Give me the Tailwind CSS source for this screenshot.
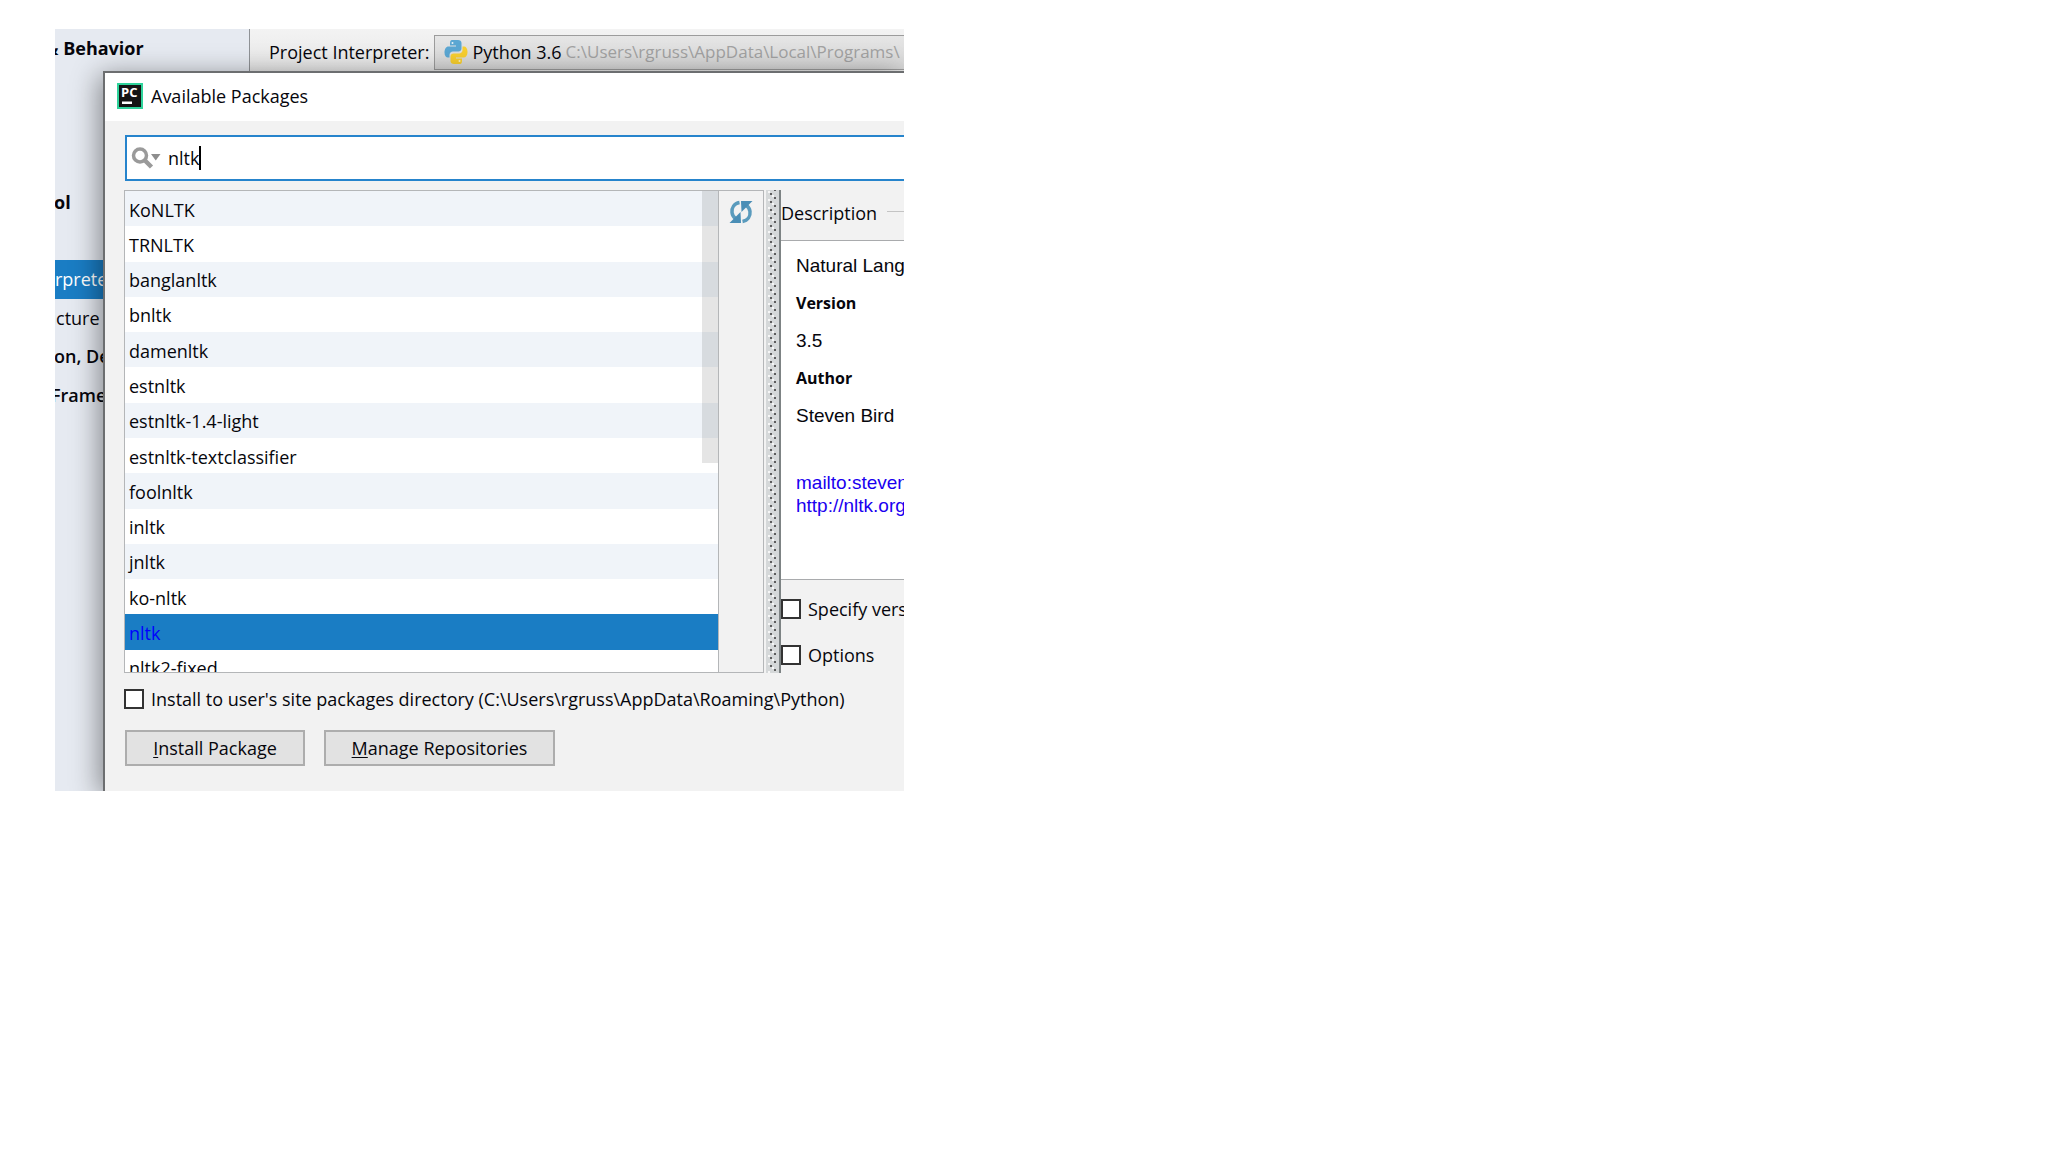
<!DOCTYPE html>
<html lang="en">
<head>
<meta charset="utf-8">
<title>Available Packages</title>
<script src="https://cdn.jsdelivr.net/npm/@tailwindcss/browser@4"></script>
</head>
<body class="bg-white font-['Open_Sans','Noto_Sans',sans-serif] text-[18px] leading-6 text-[#06060c]">
<main class="pt-[29px] pl-[55px]">
  <div class="grid w-full max-w-[849px] overflow-hidden bg-[#f2f2f2]">

    <!-- Settings window behind the dialog -->
    <div class="col-start-1 row-start-1 flex min-w-0">
      <nav class="w-[195px] shrink-0 border-r border-[#8f9296] bg-[#e6eaf1]">
        <ul class="grid h-[385px] grid-rows-10 items-stretch whitespace-nowrap">
          <li class="row-start-1 -ml-[10px] flex items-center font-bold">&amp; Behavior</li>
          <li class="row-start-5 -ml-px flex items-center font-bold">ol</li>
          <li class="row-start-7 flex items-center bg-[#1a7dc4] text-white">rprete</li>
          <li class="row-start-8 -ml-[10px] flex items-center">ucture</li>
          <li class="row-start-9 -ml-px flex items-center font-semibold">on, De</li>
          <li class="row-start-10 -ml-1 flex items-center font-semibold">Frame</li>
        </ul>
      </nav>
      <div class="flex h-[46px] min-w-0 flex-1 items-center gap-[5px] bg-linear-to-b from-[#f3f3f3] to-[#e6e6e6] pl-[19px] whitespace-nowrap">
        <label for="interp" class="shrink-0">Project Interpreter:</label>
        <div class="flex h-[35px] flex-1 items-center overflow-hidden border border-r-0 border-[#9c9c9c] bg-linear-to-b from-[#e6e6e6] to-[#d6d6d6] pl-[9px]">
          <svg class="mr-1 size-6 shrink-0" viewBox="0 0 24 24">
            <path fill="#5ba7d3" d="M8 0h6c2 0 3.500 1.200 3.500 3v5.500c0 2-1.500 3-3 3H9c-2 0-3.500 1.500-3.500 3.500V17.500H4c-2 0-3.500-1.600-3.500-5S2 6.500 4.500 6.500H12V5.500H6V3.500C6 1.500 6.500 0 8 0z"/>
            <path fill="#f8cf2f" d="M16 24h-6c-2 0-3.500-1.200-3.500-3v-4.500c0-2 1.500-3 3-3H15c2 0 3.500-1.500 3.500-3.500V6.500H20c2 0 3.500 2 3.500 5.500s-1.500 5.500-4 5.500H12v1h6v2c0 2-.500 3.500-2 3.500z"/>
            <circle cx="8.500" cy="3" r="1" fill="#e8f2f8"/><circle cx="15.500" cy="21" r="1" fill="#fdf3c4"/>
          </svg>
          <select id="interp" class="field-sizing-content shrink-0 appearance-none bg-transparent"><option>Python 3.6</option></select>
          <span class="ml-1 text-[17px] text-[#a2a2a2]">C:\Users\rgruss\AppData\Local\Programs\</span>
        </div>
      </div>
    </div>

    <!-- Available Packages dialog -->
    <section role="dialog" aria-labelledby="dlg" class="col-start-1 row-start-1 mt-[42px] ml-12 min-w-0 border-t-2 border-l-2 border-[#6c6e70] bg-[#f2f2f2] shadow-[-4px_4px_26px_rgba(0,0,0,0.42)]">
      <header class="flex h-12 items-center gap-2 bg-white pb-0.5 pl-3">
        <svg class="size-[26px]" viewBox="0 0 26 26">
          <rect width="26" height="26" fill="#2fd39b"/><rect x="2" y="2" width="22" height="22" fill="#151515"/>
          <text x="4" y="14" font-family="Open Sans, sans-serif" font-weight="700" font-size="13" fill="#fff">PC</text>
          <rect x="5" y="18.500" width="10" height="2.500" fill="#fff"/>
        </svg>
        <h1 id="dlg">Available Packages</h1>
      </header>

      <div class="pt-[14px] pb-[25px] pl-[19px]">
        <div class="ml-px flex h-[46px] items-center border-2 border-r-0 border-[#2684cc] bg-white pl-1">
          <svg class="w-[30px] shrink-0" viewBox="0 0 30 22" fill="none">
            <circle cx="9" cy="8.500" r="6.500" stroke="#9a9a9a" stroke-width="3.500"/>
            <path d="M13.500 13l7 7" stroke="#9a9a9a" stroke-width="4.500"/>
            <path d="M20 7h9.500l-4.750 6.500z" fill="#8e8e8e"/>
          </svg>
          <input aria-label="Search packages" value="nltk" class="ml-[7px] field-sizing-content outline-none">
          <span class="h-6 w-0.5 bg-black"></span>
        </div>

        <div class="mt-[9px] flex h-[483px]">
          <div class="flex w-[640px] shrink-0 border border-[#b4b6b8]">
            <div class="relative flex-1 overflow-hidden bg-white">
              <ul class="grid h-[494px] grid-rows-14 *:flex *:items-center *:pt-0.5 *:pl-1 *:odd:bg-[#f0f4f9]">
                <li>KoNLTK</li>
                <li>TRNLTK</li>
                <li>banglanltk</li>
                <li>bnltk</li>
                <li>damenltk</li>
                <li>estnltk</li>
                <li>estnltk-1.4-light</li>
                <li>estnltk-textclassifier</li>
                <li>foolnltk</li>
                <li>inltk</li>
                <li>jnltk</li>
                <li>ko-nltk</li>
                <li class="bg-[#1a7dc4]! text-[#0000ff]">nltk</li>
                <li>nltk2-fixed</li>
              </ul>
              <div class="absolute top-0 right-0 h-[272px] w-4 bg-black/10"></div>
            </div>
            <div class="flex w-[45px] justify-center border-l border-[#b4b6b8] pt-[9px] pr-px">
              <button aria-label="Reload list of packages" class="size-6 self-start">
                <svg viewBox="0 0 24 24" fill="none">
                  <path d="M10.500 2.500C5 3.500 2.500 8 3 12.500c.300 2.500 1.500 4.500 3.500 6" stroke="#5a9bbd" stroke-width="3.500"/>
                  <path d="M13.500 21.500c5.500-1 8-5.500 7.500-10-.300-2.500-1.500-4.500-3.500-6" stroke="#5a9bbd" stroke-width="3.500"/>
                  <path d="M12 1h11.500L12.500 12z" fill="#4a8eb6"/>
                  <path d="M12 23H.500l11-11z" fill="#4a8eb6"/>
                </svg>
              </button>
            </div>
          </div>

          <svg class="ml-0.5 h-full w-[15px] shrink-0 border-r-2 border-[#7d8384] bg-[#d5d8d9]" aria-hidden="true">
            <defs><pattern id="grip" width="13" height="8" patternUnits="userSpaceOnUse">
              <rect x="2" y="1" width="2" height="2" fill="#f6f6f6"/><rect x="6" y="5" width="2" height="2" fill="#f6f6f6"/>
              <rect x="4" y="3" width="2" height="2" fill="#5d5d5d"/><rect x="8" y="7" width="2" height="1" fill="#5d5d5d"/><rect x="8" width="2" height="1" fill="#5d5d5d"/>
            </pattern></defs>
            <rect width="13" height="100%" fill="url(#grip)"/>
          </svg>

          <div class="flex min-w-0 flex-1 flex-col overflow-hidden whitespace-nowrap">
            <h2 class="flex h-[50px] items-center gap-[10px] pb-1">Description<span class="mb-1 h-px flex-1 bg-[#c4c4c4]"></span></h2>
            <div class="h-[340px] border-y border-[#a9abad] bg-white pt-[13px] pl-[15px] font-['Liberation_Sans',Arial,sans-serif] text-[19px] leading-[23px]">
              <p>Natural Language Toolkit</p>
              <h3 class="mt-[15px] font-['Open_Sans',sans-serif] text-[16px] font-bold">Version</h3>
              <p class="mt-[14px]">3.5</p>
              <h3 class="mt-[15px] font-['Open_Sans',sans-serif] text-[16px] font-bold">Author</h3>
              <p class="mt-[14px]">Steven Bird</p>
              <p class="mt-[44px] text-[#1a00f0]"><a href="#mail">mailto:stevenbird1@gmail.com</a><br><a href="#site">http://nltk.org/</a></p>
            </div>
            <label class="mt-[17px] flex items-center gap-[7px]"><input type="checkbox" class="size-5 shrink-0 appearance-none border-2 border-[#333] bg-white">Specify version</label>
            <label class="mt-[22px] flex items-center gap-[7px]"><input type="checkbox" class="size-5 shrink-0 appearance-none border-2 border-[#333] bg-white">Options</label>
          </div>
        </div>

        <label class="mt-[14px] flex items-center gap-[7px] whitespace-nowrap"><input type="checkbox" class="size-5 shrink-0 appearance-none border-2 border-[#333] bg-white">Install to user's site packages directory (C:\Users\rgruss\AppData\Roaming\Python)</label>
        <div class="mt-[19px] ml-px flex gap-[19px] whitespace-nowrap">
          <button class="h-9 w-[180px] border-2 border-[#adadad] bg-[#e2e2e2]"><u class="underline-offset-2">I</u>nstall Package</button>
          <button class="h-9 w-[231px] border-2 border-[#adadad] bg-[#e2e2e2]"><u class="underline-offset-2">M</u>anage Repositories</button>
        </div>
      </div>
    </section>
  </div>
</main>
</body>
</html>
